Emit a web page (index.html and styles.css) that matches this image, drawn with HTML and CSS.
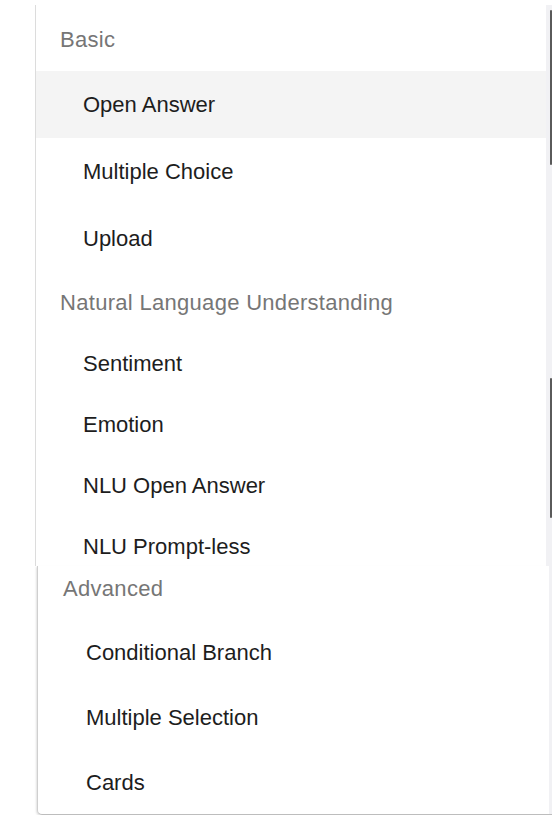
FILE: index.html
```html
<!DOCTYPE html>
<html lang="en">
<head>
<meta charset="UTF-8">
<meta name="viewport" content="width=device-width,initial-scale=1.0">
<title>Question types</title>

<link rel="stylesheet" href="styles.css">
</head>
<body>

<!-- three snapshots of the same menu, stacked -->
<section class="panel panel-basic">
  <div class="list">
    <div class="group">Basic</div>
    <div class="item active">Open Answer</div>
    <div class="item">Multiple Choice</div>
    <div class="item">Upload</div>
  </div>
  <div class="track"><div class="thumb"></div></div>
</section>

<section class="panel panel-nlu">
  <div class="list">
    <div class="group">Natural Language Understanding</div>
    <div class="item">Sentiment</div>
    <div class="item">Emotion</div>
    <div class="item">NLU Open Answer</div>
    <div class="item">NLU Prompt-less</div>
  </div>
  <div class="track"><div class="thumb"></div></div>
</section>

<section class="panel panel-adv">
  <div class="list">
    <div class="group">Advanced</div>
    <div class="item">Conditional Branch</div>
    <div class="item">Multiple Selection</div>
    <div class="item">Cards</div>
  </div>
  <div class="track"></div>
</section>

</body>
</html>
```

FILE: styles.css
```css
html,body{
  margin:0;
  padding:0;
  background:#fff;
  color:#1d1d1d;
  font-family:"Liberation Sans",Arial,sans-serif;
  font-size:22px;
}
body{padding-top:5px;}

/* ----------  PANELS  ---------- */
.panel{
  display:flex;
  margin-left:35px;
  border-left:1px solid #dcdcdc;
  background:#fff;
  overflow:hidden;
  box-sizing:border-box;
}
.list{
  flex:1;
  overflow:hidden;
}
.group{
  display:flex;
  align-items:center;
  padding-left:24px;
  color:#767676;
  letter-spacing:.3px;
  box-sizing:border-box;
}
.item{
  display:flex;
  align-items:center;
  padding-left:47px;
}
.item.active{background:#f4f4f4;}

/* fake scrollbar */
.track{
  width:6px;
  background:#f1f1f4;
}
.thumb{
  width:2px;
  margin-left:4px;
  background:#5a5a5a;
  border-radius:1px;
}

/* basic */
.panel-basic{height:265px;}
.panel-basic .group{height:66px;padding-top:4px;}
.panel-basic .item{height:67px;}
.panel-basic .thumb{margin-top:5px;height:155px;}

/* nlu */
.panel-nlu{height:296px;}
.panel-nlu .group{height:63px;padding-top:2px;}
.panel-nlu .item{height:61px;}
.panel-nlu .thumb{margin-top:108px;height:140px;}

/* advanced */
.panel-adv{
  height:249px;
  margin-left:37px;
  border-left:1px solid #cfcfcf;
  border-bottom:1px solid #bdbdbd;
  border-radius:0 0 0 5px;
  box-shadow:-1px 1px 2px rgba(0,0,0,.12);
}
.panel-adv .group{
  align-items:flex-start;
  height:54px;
  padding-left:25px;
  padding-top:11px;
  line-height:24px;
}
.panel-adv .item{height:65px;padding-left:48px;}
.panel-adv .track{width:3px;}
```
